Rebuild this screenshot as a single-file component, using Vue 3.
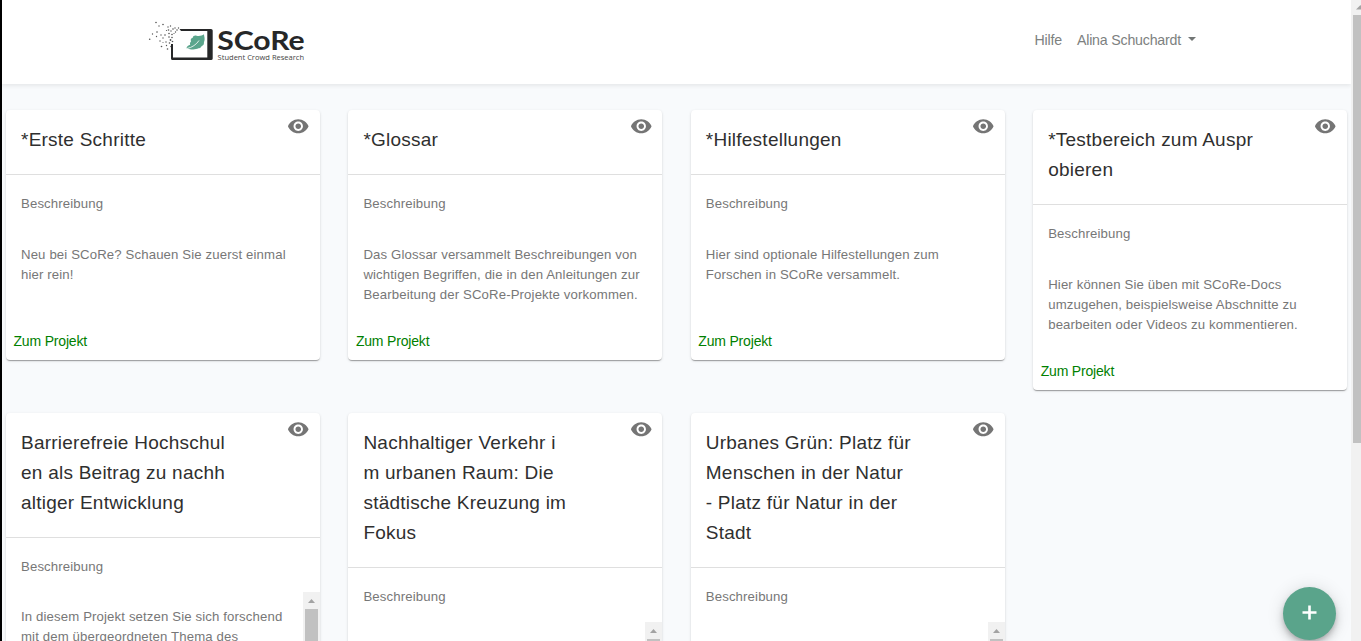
<script setup>
const firstRow = [
  { title: ['*Erste Schritte'], text: ['Neu bei SCoRe? Schauen Sie zuerst einmal', 'hier rein!'] },
  {
    title: ['*Glossar'],
    text: [
      'Das Glossar versammelt Beschreibungen von',
      'wichtigen Begriffen, die in den Anleitungen zur',
      'Bearbeitung der SCoRe-Projekte vorkommen.',
    ],
  },
  { title: ['*Hilfestellungen'], text: ['Hier sind optionale Hilfestellungen zum', 'Forschen in SCoRe versammelt.'] },
  {
    title: ['*Testbereich zum Auspr', 'obieren'],
    text: [
      'Hier können Sie üben mit SCoRe-Docs',
      'umzugehen, beispielsweise Abschnitte zu',
      'bearbeiten oder Videos zu kommentieren.',
    ],
  },
]
const secondRow = [
  {
    title: ['Barrierefreie Hochschul', 'en als Beitrag zu nachh', 'altiger Entwicklung'],
    text: ['In diesem Projekt setzen Sie sich forschend', 'mit dem übergeordneten Thema des'],
    scroll: true,
  },
  { title: ['Nachhaltiger Verkehr i', 'm urbanen Raum: Die', 'städtische Kreuzung im', 'Fokus'], text: [], scroll: true },
  { title: ['Urbanes Grün: Platz für', 'Menschen in der Natur', '- Platz für Natur in der', 'Stadt'], text: [], scroll: true },
]
const rows = [firstRow, secondRow]
const dots = [
  [156, 22.5, 0.8], [163, 24.5, 0.8], [159, 26, 0.7], [168, 27, 0.7], [170.5, 26, 0.7], [166.5, 30.5, 0.6],
  [157, 32, 0.8], [152.5, 34, 0.7], [149.7, 39.3, 0.8], [156.5, 36.5, 0.7], [161, 35, 0.7], [163, 38, 0.7],
  [160, 41, 0.7], [165, 35, 0.8], [168.5, 30, 0.8], [171, 31, 0.7], [169, 33.5, 0.8], [172, 34.5, 0.8],
  [166, 42, 0.7], [169, 37, 0.8], [172, 37.5, 0.8], [170.5, 40, 0.9], [161.5, 46.5, 0.8], [166.5, 45.5, 0.7],
  [169.5, 43, 0.8], [172.5, 41.5, 0.8], [167.5, 49, 0.8], [171, 46.5, 0.8], [173, 29, 0.8], [175.5, 32, 0.7],
  [175, 28, 0.7], [177, 30, 0.8], [178.5, 28, 0.7], [174, 33.5, 0.6], [163, 42.5, 0.5],
]
</script>

<template>
  <div class="screen">
    <div class="page">
      <header class="topbar">
        <svg class="logo" viewBox="146 16 164 50" width="164" height="50">
          <circle v-for="(d, i) in dots" :key="i" :cx="d[0]" :cy="d[1]" :r="d[2]" fill="#555" />
          <path d="M179.500 29H211Q212.700 29 212.700 30.500V58.500Q212.700 60 211 60H172.500Q171 60 171 58.500V44H173V57.600H207.300V31H181Z" fill="#262728" />
          <path d="M190.200 44.800C189.700 43.500 190 42.300 191 41.500C190.300 39.500 191 38 192.700 37.800C193 36 194.500 35.300 196.500 35.700C199.500 36.300 202 35.600 204 34.300C204 36 204.800 37.500 204.600 39.500C204.500 41.300 203.800 42 203.900 43.500C204 45.200 202.300 45.700 201.500 46.200C201 48 199.500 48 198.500 48.300C196 49.700 192 49.700 189 48.900L186.500 48.200C186.600 46.500 188.500 45.500 190.200 44.800Z" fill="#5aa58c" />
          <path d="M187 48.500C192 47.500 196.500 44.500 199 40.500" fill="none" stroke="#fff" stroke-width=".8" />
          <text class="brand" x="217.200" y="50.300" textLength="87.500" lengthAdjust="spacingAndGlyphs">SCoRe</text>
          <text class="claim" x="217.600" y="59.700" textLength="86.500" lengthAdjust="spacingAndGlyphs">Student Crowd Research</text>
        </svg>
        <nav class="nav">
          <a>Hilfe</a>
          <a class="user">Alina Schuchardt<i class="caret"></i></a>
        </nav>
      </header>
      <main class="board">
        <div v-for="(row, r) in rows" :key="r" class="row">
          <article v-for="card in row" :key="card.title[0]" class="card">
            <div class="head">
              <h2><span v-for="line in card.title" :key="line">{{ line }}</span></h2>
              <svg class="eye" viewBox="0 0 24 24" width="22.500" height="22.500">
                <path fill="#757575" d="M12 4.500C7 4.500 2.730 7.610 1 12c1.730 4.390 6 7.500 11 7.500s9.270-3.110 11-7.500c-1.730-4.390-6-7.500-11-7.500zM12 17c-2.760 0-5-2.240-5-5s2.240-5 5-5 5 2.240 5 5-2.240 5-5 5zm0-8c-1.660 0-3 1.340-3 3s1.340 3 3 3 3-1.340 3-3-1.340-3-3-3z" />
              </svg>
            </div>
            <p class="label">Beschreibung</p>
            <div class="desc" :class="{ long: card.scroll }">
              <p><span v-for="line in card.text" :key="line">{{ line }}</span></p>
              <div v-if="card.scroll" class="track">
                <svg width="17" height="17" viewBox="0 0 17 17"><path d="M5 11L8.500 7L12 11Z" fill="#a3a3a3" /></svg>
                <div class="thumb"></div>
              </div>
            </div>
            <a class="link">Zum Projekt</a>
          </article>
        </div>
      </main>
    </div>
    <aside class="pagebar">
      <svg width="10" height="15" viewBox="0 0 10 15"><path d="M5 9.500L9.500 5L14 9.500Z" fill="#a3a3a3" /></svg>
      <div class="pagethumb"></div>
    </aside>
    <button class="fab" aria-label="Neu">
      <svg width="53" height="53" viewBox="0 0 53 53"><path d="M19.500 25.500H33.500M26.500 18.500V32.500" stroke="#fff" stroke-width="2.600" /></svg>
    </button>
  </div>
</template>

<style>
body { margin: 0; overflow: hidden; }
</style>

<style scoped>
.screen {
  position: relative;
  display: flex;
  box-sizing: border-box;
  width: 1361px;
  height: 641px;
  overflow: hidden;
  border-left: 2px solid #000;
  background: #f8fafc;
  font-family: "Liberation Sans", Arial, sans-serif;
}
.page { flex: 1; min-width: 0; height: 641px; overflow: hidden; }
.topbar {
  display: flex;
  justify-content: space-between;
  box-sizing: border-box;
  height: 84px;
  padding: 16px 155px 0 144px;
  background: #fff;
  box-shadow: 0 2px 4px rgba(0, 0, 0, .075);
}
.logo { display: block; }
.brand { font: 700 27px Lato, sans-serif; fill: #262728; }
.claim { font: 400 7.800px "Open Sans", sans-serif; fill: #444; }
.nav { display: flex; gap: 15px; font-size: 14.200px; line-height: 24px; height: 24px; margin-top: 12px; color: #7d8180; letter-spacing: -.2px; }
.user { display: flex; align-items: center; }
.caret { margin-left: 7px; margin-top: -3px; border: 4px solid transparent; border-top-color: #727675; border-bottom: 0; }
.board { padding: 26px 0 0 4px; }
.row { display: flex; align-items: flex-start; gap: 28.400px; height: 303px; }
.card {
  flex: none;
  width: 314px;
  border-radius: 4px;
  background: #fff;
  overflow: hidden;
  box-shadow: 0 2px 1px -1px rgba(0, 0, 0, .2), 0 1px 1px rgba(0, 0, 0, .14), 0 1px 3px rgba(0, 0, 0, .12);
}
.head { display: flex; justify-content: space-between; padding: 15px 10.400px 19px 15px; border-bottom: 1px solid #dfdfdf; }
h2 { margin: 0; font-size: 19px; line-height: 30px; font-weight: 400; letter-spacing: .24px; color: #2f2f2f; }
h2 span, .desc span { display: block; white-space: pre; }
.eye { margin-top: -10px; }
.label, .desc p { margin: 0; font-size: 13.200px; line-height: 20px; letter-spacing: .13px; color: #777; }
.label { padding: 19px 15px 15px; }
.desc { display: flex; justify-content: space-between; height: 94px; }
.desc p { padding: 16px 0 0 15px; }
.desc.long p { padding-top: 15px; }
.desc.long { height: 150px; }
.track { width: 17px; background: #f1f1f1; }
.track svg { display: block; }
.thumb { width: 13px; height: 60px; margin: 0 auto; background: #c1c1c1; }
.link { display: block; padding: 8px 8px 9px 7.500px; font-size: 14px; line-height: 20px; letter-spacing: -.18px; color: #008000; }
.pagebar { width: 10px; background: #f1f1f1; }
.pagebar svg { display: block; }
.pagethumb { width: 8px; height: 428px; margin-left: 2px; background: #c1c1c1; }
.fab {
  position: absolute;
  left: 1281px;
  top: 587px;
  width: 53px;
  height: 53px;
  padding: 0;
  border: 0;
  border-radius: 50%;
  background: #5aa48b;
  box-shadow: 0 3px 5px -1px rgba(0, 0, 0, .2), 0 6px 10px rgba(0, 0, 0, .14), 0 1px 18px rgba(0, 0, 0, .12);
}
.fab svg { display: block; }
</style>
